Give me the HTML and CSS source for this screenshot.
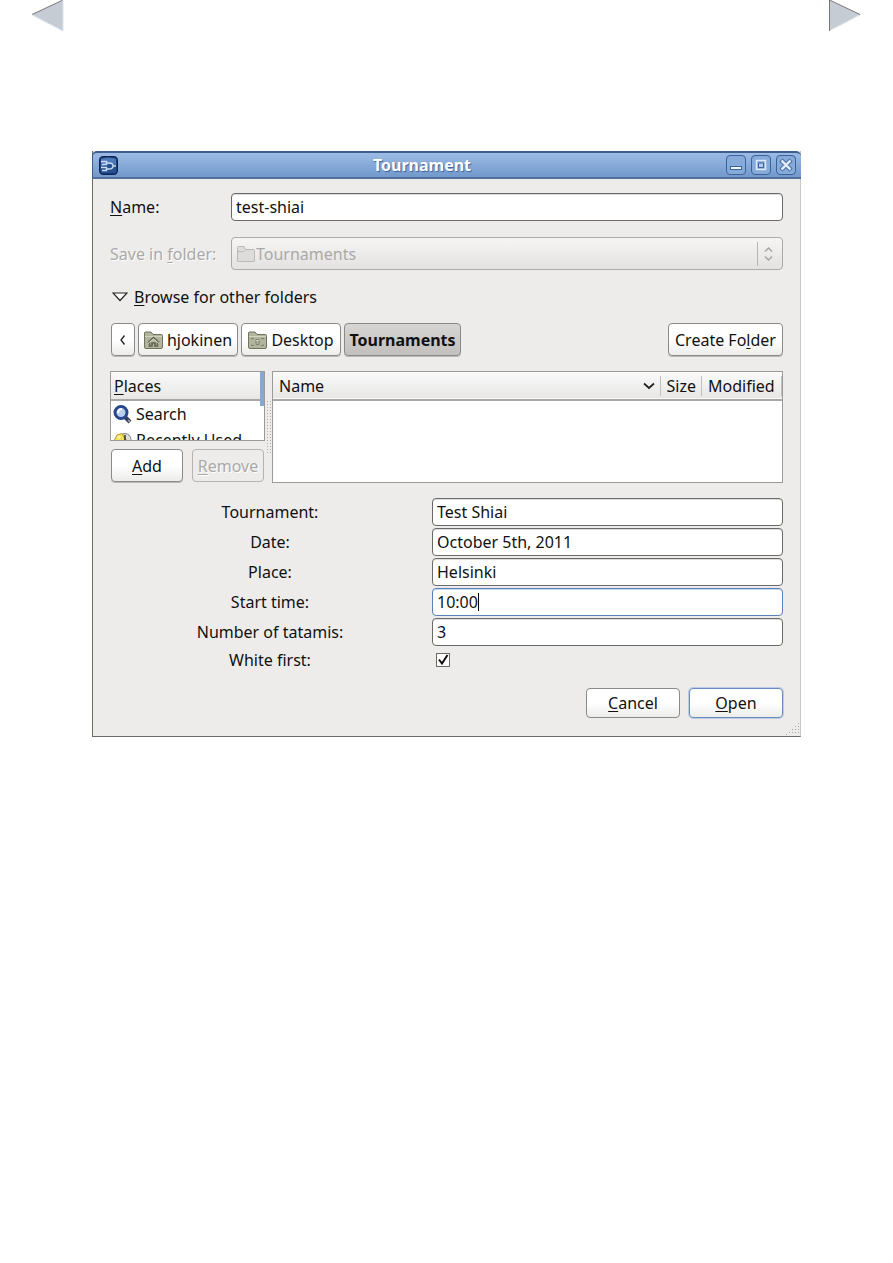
FILE: index.html
```html
<!DOCTYPE html>
<html lang="en">
<head>
    <meta charset="UTF-8">
    <meta name="viewport" content="width=device-width, initial-scale=1.0">
    <title>Tournament</title>
    <link rel="stylesheet" href="styles.css">
</head>
<body>
    <nav class="page-nav">
        <a href="#prev" aria-label="Previous page">
            <svg width="33" height="32" viewBox="0 0 33 32">
                <path d="M0 14.500 31 0V31Z" fill="#c5ccd3"/>
                <path d="M0 14.500 31 0" stroke="#777" fill="none"/>
                <path d="M0 15 31 31V0" stroke="#d9e5ec" fill="none"/>
            </svg>
        </a>
        <a href="#next" aria-label="Next page">
            <svg width="33" height="32" viewBox="0 0 33 32">
                <path d="M1 0 32 14.500 1 31Z" fill="#c5ccd3"/>
                <path d="M1 31 32 15" stroke="#d9e5ec" fill="none"/>
                <path d="M1.500 31V0L32 14.500" stroke="#777" fill="none"/>
            </svg>
        </a>
    </nav>

    <main class="window">
        <header class="titlebar">
            <svg class="app-icon" width="19" height="19" viewBox="0 0 19 19">
                <rect x=".7" y=".7" width="17.600" height="17.600" rx="3.500" fill="#24508f" stroke="#0d2454" stroke-width="1.400"/>
                <path d="M2 3Q9 0 17 3V9Q9 6 2 11Z" fill="#5f8bc8" opacity=".7"/>
                <path d="M2 5.500H7.500V8.500H3M2 11.500H7.500V14.500H3M7.500 7H10Q14 7 14 10Q14 13 10 13H7.500M14 10H17" fill="none" stroke="#c9dcf2" stroke-width="1.400"/>
            </svg>
            <h1>Tournament</h1>
            <div class="window-buttons">
                <button aria-label="Minimize">
                    <svg width="18" height="18" viewBox="0 0 18 18"><rect x="3.500" y="10.500" width="11" height="3" fill="#eef5fc" stroke="#3b6399"/></svg>
                </button>
                <button aria-label="Maximize">
                    <svg width="18" height="18" viewBox="0 0 18 18">
                        <path d="M4.500 4.500H13.500V13.500H4.500Z" fill="#86aada" stroke="#dce9f8" stroke-width="1.500"/>
                        <path d="M6.500 7H11.500V11.500H6.500Z" fill="#b4cdec" stroke="#3b6399"/>
                    </svg>
                </button>
                <button aria-label="Close">
                    <svg width="18" height="18" viewBox="0 0 18 18">
                        <path d="M4 4 14 14M14 4 4 14" stroke="#3b6399" stroke-width="4.500"/>
                        <path d="M4.500 4.500 13.500 13.500M13.500 4.500 4.500 13.500" stroke="#dce9f8" stroke-width="2.500"/>
                    </svg>
                </button>
            </div>
        </header>

        <form class="content">
            <div class="save-row">
                <label for="name"><u>N</u>ame:</label>
                <input type="text" id="name" value="test-shiai">
            </div>
            <div class="save-row disabled">
                <label for="folder">Save in <u>f</u>older:</label>
                <div class="combo">
                    <svg width="20" height="18" viewBox="0 0 20 18">
                        <path d="M1.500 16V2.500Q1.500 1.500 2.500 1.500H8L9.500 4.500H17.500Q18.500 4.500 18.500 5.500V16Q18.500 16.500 17.500 16.500H2.500Q1.500 16.500 1.500 16ZM1.500 6.500H7.500L9.500 4.500" fill="#dddcda" stroke="#bab9b7"/>
                    </svg>
                    <select id="folder" disabled>
                        <option>Tournaments</option>
                    </select>
                    <svg class="combo-arrows" width="24" height="24" viewBox="0 0 24 24">
                        <path d="M1.500 0V24" stroke="#b5b4b2"/>
                        <path d="M9 9.500 12.500 6 16 9.500M9 14.500 12.500 18 16 14.500" fill="none" stroke="#a5a4a2" stroke-width="1.500"/>
                    </svg>
                </div>
            </div>

            <button type="button" class="expander">
                <svg width="16" height="10" viewBox="0 0 16 10"><path d="M1 1H15L8 8.500Z" fill="#fff" stroke="#222" stroke-width="1.200"/></svg>
                <span><u>B</u>rowse for other folders</span>
            </button>

            <div class="path-bar">
                <button type="button" class="btn back" aria-label="Back">
                    <svg width="8" height="12" viewBox="0 0 8 12"><path d="M5.500 1.500 2 6 5.500 10.500" fill="none" stroke="#222" stroke-width="1.300"/></svg>
                </button>
                <button type="button" class="btn crumb">
                    <svg width="19" height="18" viewBox="0 0 19 18">
                        <path d="M.5 16V2Q.5 1 1.500 1H7L9 3.500H17.500Q18.500 3.500 18.500 4.500V16Q18.500 17.500 17 17.500H2Q.5 17.500 .5 16Z" fill="#b2b59d" stroke="#70735f"/>
                        <path d="M1 5.500H18" stroke="#d2d5c2"/>
                        <path d="M4 11.500 9.500 6.500 15 11.500M5.500 11V15H8V12H11V15H13.500V11" fill="none" stroke="#62664f" stroke-width="1.600"/>
                        <path d="M4 12.500 9.500 8 15 12.500" fill="none" stroke="#edeee3" stroke-width=".8"/>
                    </svg>
                    hjokinen
                </button>
                <button type="button" class="btn crumb">
                    <svg width="19" height="18" viewBox="0 0 19 18">
                        <path d="M.5 16V2Q.5 1 1.500 1H7L9 3.500H17.500Q18.500 3.500 18.500 4.500V16Q18.500 17.500 17 17.500H2Q.5 17.500 .5 16Z" fill="#b2b59d" stroke="#70735f"/>
                        <path d="M1 5.500H18" stroke="#d2d5c2"/>
                        <path d="M3.500 8.500V7.500H6M13 7.500H15.500V8.500M3.500 13.500V14.500H6M13 14.500H15.500V13.500M8 8.500H11V13.500H8Z" fill="none" stroke="#7d816a"/>
                        <path d="M8.500 9.500H10.500" stroke="#eff0e5"/>
                    </svg>
                    Desktop
                </button>
                <button type="button" class="btn crumb active">Tournaments</button>
                <button type="button" class="btn create">Create Fo<u>l</u>der</button>
            </div>

            <div class="browser">
                <div class="side">
                    <div class="places">
                        <h2><u>P</u>laces</h2>
                        <ul>
                            <li>
                                <svg width="19" height="19" viewBox="0 0 19 19">
                                    <path d="M12.500 12.500 17 17" stroke="#343d55" stroke-width="4"/>
                                    <circle cx="8" cy="7.500" r="6" fill="#b9cdec" stroke="#27468e" stroke-width="3"/>
                                    <path d="M5 8Q5 4.500 9 4" fill="none" stroke="#fff" stroke-width="2"/>
                                    <path d="M15 15 17 17" stroke="#999" stroke-width="2"/>
                                </svg>
                                Search
                            </li>
                            <li>
                                <svg width="19" height="19" viewBox="0 0 19 19">
                                    <circle cx="12" cy="8.500" r="6" fill="#deded8" stroke="#85857d"/>
                                    <path d="M1 10 4 4 9 2.500 12 8 9 18H2Z" fill="#f1df60" stroke="#b59b24"/>
                                    <circle cx="6" cy="6" r="1.500" fill="#fff7b0"/>
                                    <path d="M12 4V8.500L15 11" fill="none" stroke="#333" stroke-width="1.500"/>
                                </svg>
                                Recently Used
                            </li>
                        </ul>
                        <span class="scroll-thumb"></span>
                    </div>
                    <div class="side-buttons">
                        <button type="button" class="btn"><u>A</u>dd</button>
                        <button type="button" class="btn" disabled><u>R</u>emove</button>
                    </div>
                </div>
                <div class="splitter"></div>
                <div class="files">
                    <table>
                        <thead>
                            <tr>
                                <th class="col-name">
                                    <div>
                                        Name
                                        <svg width="12" height="8" viewBox="0 0 12 8"><path d="M1 1.500 6 6 11 1.500" fill="none" stroke="#222" stroke-width="1.700"/></svg>
                                    </div>
                                </th>
                                <th class="col-size">Size</th>
                                <th class="col-modified">Modified</th>
                            </tr>
                        </thead>
                        <tbody></tbody>
                    </table>
                </div>
            </div>

            <div class="details">
                <label for="tournament">Tournament:</label>
                <input type="text" id="tournament" value="Test Shiai">
                <label for="date">Date:</label>
                <input type="text" id="date" value="October 5th, 2011">
                <label for="place">Place:</label>
                <input type="text" id="place" value="Helsinki">
                <label for="start">Start time:</label>
                <div class="focused">
                    <input type="text" id="start" value="10:00">
                </div>
                <label for="tatamis">Number of tatamis:</label>
                <input type="text" id="tatamis" value="3">
                <label for="white" class="check-label">White first:</label>
                <div class="check">
                    <input type="checkbox" id="white" checked>
                    <svg width="14" height="14" viewBox="0 0 14 14"><path d="M3 6.500 6 10.500 11.500 2" fill="none" stroke="#111" stroke-width="2"/></svg>
                </div>
            </div>

            <div class="actions">
                <button type="button" class="btn"><u>C</u>ancel</button>
                <button type="submit" class="btn default"><u>O</u>pen</button>
            </div>
        </form>
        <svg class="grip" width="13" height="13" viewBox="0 0 13 13">
            <path d="M12.500 1V13M9.500 4V13M6.500 7V13M3.500 10V13M.5 12V13" stroke="#aaa9a7" stroke-dasharray="1 2"/>
        </svg>
    </main>
</body>
</html>
```
FILE: styles.css
```css
:root {
    --bg: #edeceb;
    --text: #111;
    --muted: #aaa9a7;
    --border: #8b8a88;
    --field-border: #6b6a69;
    --blue: #5b82b8;
}

* {
    box-sizing: border-box;
}

body {
    margin: 0;
    background: #fff;
    color: var(--text);
    font: 16px/22px "Noto Sans", sans-serif;
}

svg {
    display: block;
    flex: none;
}

u {
    text-underline-offset: 2px;
    text-decoration-skip-ink: none;
}

input, button, select {
    font: inherit;
    color: inherit;
    margin: 0;
}

.page-nav {
    display: flex;
    justify-content: space-between;
    padding: 0 32px;
    height: 32px;
}

/* window frame */
.window {
    position: relative;
    margin: 119px 92px 0;
    background: var(--bg);
    border: 1px solid #6b6a69;
    border-top: 0;
    border-right-color: #c9c8c7;
}

.titlebar {
    display: flex;
    align-items: center;
    height: 28px;
    margin-left: -1px;
    margin-right: -1px;
    padding: 0 5px 0 6px;
    background: linear-gradient(#9bbbe4, #7299cc);
    border-top: 2px solid #3c5f8e;
    border-bottom: 2px solid #53719f;
    border-left: 1px solid #3c5f8e;
    border-radius: 5px 5px 0 0;
}

.titlebar h1 {
    flex: 1;
    margin: 0;
    font-size: 16px;
    color: #fff;
    text-align: center;
    text-shadow: 1px 1px 1px #3b6296;
}

.window-buttons {
    display: flex;
    gap: 5px;
}

.window-buttons button {
    width: 20px;
    height: 20px;
    padding: 0;
    background: #86aada;
    border: 1px solid #3b6399;
    border-radius: 4px;
}

.content {
    padding: 14px 17px 18px;
}

.save-row {
    display: grid;
    grid-template-columns: 121px 1fr;
    align-items: center;
    margin-bottom: 16px;
}

.disabled {
    color: var(--muted);
    text-shadow: 1px 1px #fff;
}

input[type="text"] {
    width: 100%;
    height: 28px;
    padding: 0 4px;
    background: #fff;
    border: 1px solid var(--field-border);
    border-radius: 4px;
    box-shadow: inset 0 1px #ddd;
}

.combo {
    display: flex;
    align-items: center;
    height: 33px;
    padding: 0 2px 0 4px;
    background: linear-gradient(#f6f5f4, #e3e2e1);
    border: 1px solid #acabaa;
    border-radius: 4px;
}

.combo select {
    flex: 1;
    padding: 0;
    border: 0;
    background: none;
    color: var(--muted);
    opacity: 1;
    appearance: none;
}

.expander {
    display: flex;
    align-items: center;
    gap: 6px;
    padding: 0 2px;
    border: 0;
    background: none;
}

/* push buttons */
.btn {
    display: flex;
    align-items: center;
    justify-content: center;
    height: 33px;
    padding: 0 4px;
    background: linear-gradient(#fff 50%, #ececeb);
    border: 1px solid var(--border);
    border-radius: 4px;
    box-shadow: 0 1px #bbb9b7;
    white-space: nowrap;
}

.btn:disabled {
    color: var(--muted);
    background: #edeceb;
    border-color: #b4b3b1;
    box-shadow: none;
    text-shadow: 1px 1px #fff;
}

.path-bar {
    display: flex;
    gap: 3px;
    margin: 15px 0;
    padding-left: 1px;
}

.back {
    width: 24px;
}

.crumb {
    gap: 4px;
    min-width: 100px;
}

.crumb.active {
    min-width: 117px;
    font-weight: bold;
    background: linear-gradient(#d6d5d3, #c2bfbd);
}

.create {
    min-width: 115px;
    margin-left: auto;
}

.browser {
    display: grid;
    grid-template-columns: 155px 7px 1fr;
    height: 112px;
    margin-bottom: 15px;
}

.side {
    display: flex;
    flex-direction: column;
    gap: 8px;
}

.places {
    position: relative;
    height: 70px;
    overflow: hidden;
    background: #fff;
    border: 1px solid #9b9a98;
}

.places h2 {
    height: 29px;
    margin: 0;
    padding: 3px;
    font-size: 16px;
    font-weight: normal;
    background: linear-gradient(#fafafa, #e8e7e6);
    border-bottom: 2px solid #a9a8a6;
}

.places ul {
    margin: 0;
    padding: 0 2px;
    list-style: none;
}

.places li {
    display: flex;
    align-items: center;
    gap: 4px;
    height: 26px;
    white-space: nowrap;
}

.scroll-thumb {
    position: absolute;
    top: 0;
    right: 0;
    width: 4px;
    height: 34px;
    background: #86a8d4;
}

.side-buttons {
    display: grid;
    grid-template-columns: 1fr 1fr;
    gap: 9px;
    padding: 0 1px;
}

.splitter {
    height: 54px;
    margin: 29px 0 0 1px;
    background: radial-gradient(#b0afad 1px, transparent 1px) 0 0 / 3px 3px;
}

.files {
    background: #fff;
    border: 1px solid #9b9a98;
}

.files table {
    width: 100%;
    border-collapse: collapse;
}

.files thead {
    background: linear-gradient(#fafafa, #e8e7e6);
    border-bottom: 2px solid #a9a8a6;
}

.files th {
    height: 28px;
    padding: 0 6px;
    font-weight: normal;
    text-align: left;
    background: linear-gradient(#c1c0be, #c1c0be) right center / 1px 20px no-repeat;
}

.col-name div {
    display: flex;
    align-items: center;
    justify-content: space-between;
}

.files .col-size {
    width: 41px;
}

.files .col-modified {
    width: 80px;
}

/* tournament details */
.details {
    display: grid;
    grid-template-columns: 320px 1fr;
    gap: 2px;
    align-items: center;
    text-align: center;
}

.focused {
    position: relative;
}

.focused input[type="text"] {
    border-color: var(--blue);
    box-shadow: inset 0 1px #c9d8ec;
}

/* text cursor */
.focused::after {
    content: "";
    position: absolute;
    top: 5px;
    left: 46px;
    width: 1px;
    height: 18px;
    background: #000;
}

.check {
    position: relative;
    padding: 5px 4px;
}

.check input {
    display: block;
    width: 14px;
    height: 14px;
    background: #fff;
    border: 1px solid var(--field-border);
    appearance: none;
}

.check svg {
    position: absolute;
    top: 5px;
    left: 4px;
    pointer-events: none;
}

.actions {
    display: flex;
    justify-content: flex-end;
    gap: 9px;
    margin-top: 16px;
}

.actions .btn {
    width: 94px;
    height: 30px;
    box-shadow: none;
}

.actions .default {
    border-color: #6a8cbd;
    box-shadow: 0 0 0 1px #bccde3;
}

.grip {
    position: absolute;
    right: 1px;
    bottom: 1px;
}
```
